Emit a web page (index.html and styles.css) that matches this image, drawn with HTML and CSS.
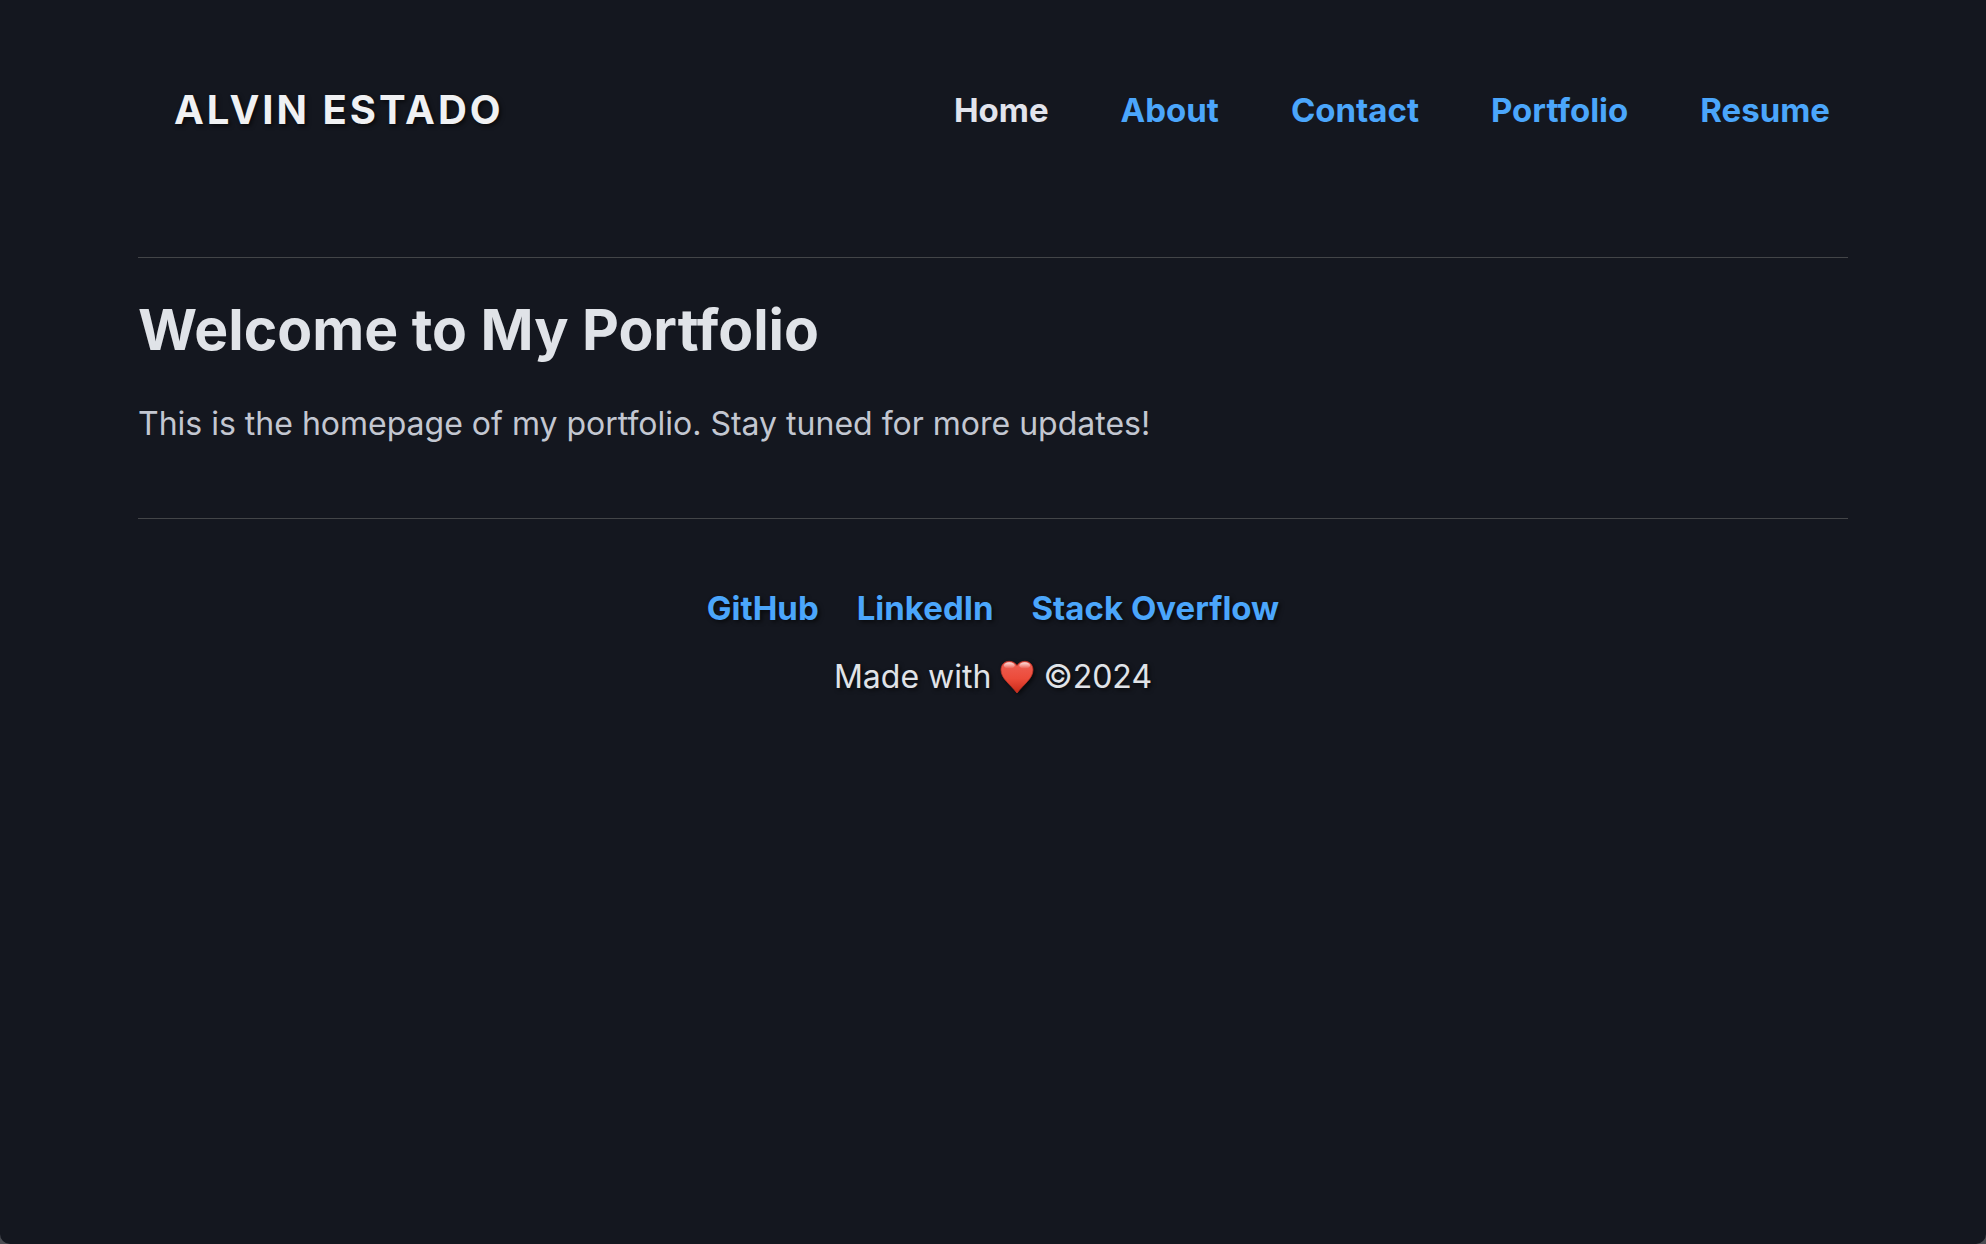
FILE: index.html
```html
<!DOCTYPE html>
<html lang="en">
<head>
<meta charset="utf-8">
<meta name="viewport" content="width=device-width, initial-scale=1">
<title>Alvin Estado</title>
<link rel="stylesheet" href="styles.css">
</head>
<body>
<div class="page">
  <header class="site-header">
    <h1 class="brand">ALVIN ESTADO</h1>
    <nav class="site-nav" aria-label="Main">
      <a class="nav-link nav-link-current" href="#home" aria-current="page">Home</a>
      <a class="nav-link" href="#about">About</a>
      <a class="nav-link" href="#contact">Contact</a>
      <a class="nav-link" href="#portfolio">Portfolio</a>
      <a class="nav-link" href="#resume">Resume</a>
    </nav>
  </header>
  <main class="intro">
    <h2 class="intro-title">Welcome to My Portfolio</h2>
    <p class="intro-text">This is the homepage of my portfolio. Stay tuned for more updates!</p>
  </main>
  <footer class="site-footer">
    <div class="social">
      <a class="social-link" href="#github">GitHub</a>
      <a class="social-link" href="#linkedin">LinkedIn</a>
      <a class="social-link" href="#stackoverflow">Stack Overflow</a>
    </div>
    <p class="credit"><span>Made with</span>
      <svg class="heart" viewBox="0 0 34 34" role="img" aria-label="love">
        <defs>
          <linearGradient id="heart-fill" x1="0" y1="0" x2="0" y2="1">
            <stop offset="0" stop-color="#ee6054"/>
            <stop offset="0.55" stop-color="#ec4b3a"/>
            <stop offset="1" stop-color="#c92a18"/>
          </linearGradient>
          <linearGradient id="heart-shine" x1="0" y1="0" x2="0" y2="1">
            <stop offset="0" stop-color="#fff" stop-opacity="0.8"/>
            <stop offset="1" stop-color="#fff" stop-opacity="0"/>
          </linearGradient>
        </defs>
        <path fill="url(#heart-fill)" stroke="#c23427" stroke-width="0.8" d="M17 5.6C15 2.5 12 1.3 9.2 1.3C4.2 1.3 1 5 1 10C1 18.5 10 24 17 33C24 24 33 18.5 33 10C33 5 29.8 1.3 24.8 1.3C22 1.3 19 2.5 17 5.6Z"/>
        <ellipse fill="url(#heart-shine)" cx="9.3" cy="5.5" rx="5.4" ry="3.2"/>
        <ellipse fill="url(#heart-shine)" cx="24.7" cy="5.5" rx="5.4" ry="3.2"/>
      </svg>
      <span>©2024</span></p>
  </footer>
</div>
</body>
</html>
```
FILE: styles.css
```css
* {
  box-sizing: border-box;
}

html {
  background: #4a4c52;
}

body {
  min-height: 100vh;
  margin: 0;
  border-radius: 0 0 10px 10px;
  background: #14171f;
  color: #e0e3e8;
  font: 32px/54px Inter, "Liberation Sans", sans-serif;
}

a {
  color: #4ba6fb;
  font-size: 33px;
  font-weight: 700;
  text-decoration: none;
}

.page {
  padding: 0 138px;
}

.site-header {
  display: flex;
  flex-wrap: wrap;
  align-items: center;
  justify-content: space-between;
  padding: 83px 18px 120px 36px;
}

.brand {
  margin: 0;
  color: #f0f1f3;
  font-size: 40px;
  line-height: 54px;
  font-weight: 700;
  letter-spacing: 3px;
  text-shadow: 2px 2px 4px rgb(0 0 0 / 60%);
}

.site-nav {
  display: flex;
  flex-wrap: wrap;
  gap: 72px;
}

.nav-link-current {
  color: #e2e4ed;
}

.intro {
  padding: 36px 0 67px;
  border-top: 1px solid #434548;
  border-bottom: 1px solid #434548;
}

.intro-title {
  margin: 0 0 31px;
  font-size: 57px;
  line-height: 72px;
  font-weight: 700;
}

.intro-text {
  margin: 0;
  color: #c3c7d1;
}

.site-footer {
  padding-top: 62px;
  text-align: center;
  text-shadow: 2px 2px 4px rgb(0 0 0 / 60%);
}

.social {
  display: flex;
  flex-wrap: wrap;
  justify-content: center;
  gap: 38px;
}

.credit {
  display: flex;
  flex-wrap: wrap;
  align-items: center;
  justify-content: center;
  gap: 9px;
  margin: 15px 0 0;
}

.heart {
  width: 34px;
  height: 34px;
  filter: drop-shadow(2px 2px 2px rgb(0 0 0 / 60%));
}
```
